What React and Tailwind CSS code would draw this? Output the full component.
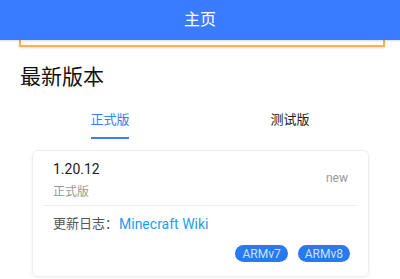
const font = { fontFamily: 'Roboto, "Noto Sans CJK SC", sans-serif' };

const App = () => {
  return (
    <div className="w-[400px] h-[279px] overflow-hidden bg-white" style={font}>
      {/* Header */}
      <div className="relative z-10 h-10 bg-[#3a7cff] flex items-center justify-center shadow-[0_1px_2px_rgba(0,0,0,0.15)]">
        <span className="text-white text-[16px]">主页</span>
      </div>
      <div className="mx-[19px] mr-[15px] h-[7px] bg-white border-x-2 border-b-2 border-[#fdb04f] shadow-sm"></div>

      {/* Title */}
      <h1 className="pl-5 pt-[16px] text-[21px] leading-[28px] text-[#111]">最新版本</h1>

      {/* Tabs */}
      <div className="px-5 grid grid-cols-2 mt-[20px]">
        <div className="flex justify-center">
          <div className="flex flex-col items-center">
            <span className="text-[13px] leading-[18px] text-[#3a7cff]">正式版</span>
            <div className="mt-[8px] h-[2px] w-[38px] bg-[#3a7cff]"></div>
          </div>
        </div>
        <div className="flex justify-center">
          <span className="text-[13px] leading-[18px] text-[#222]">测试版</span>
        </div>
      </div>

      {/* Card */}
      <div className="mt-[11px] ml-8 mr-[31px] border border-[#eceef2] rounded-md shadow-[0_1px_4px_rgba(0,0,0,0.06)] px-[10px] pt-[8px] pb-[14px]">
        <div className="flex items-center justify-between px-[10px]">
          <div>
            <div className="text-[14px] leading-[20px] text-[#1a1a1a]">1.20.12</div>
            <div className="mt-[5px] text-[12px] leading-[16px] text-[#999]">正式版</div>
          </div>
          <span className="text-[12px] text-[#999] mt-[-4px]">new</span>
        </div>
        <div className="mt-[5px] h-px bg-[#eeeff3]"></div>
        <div className="px-[10px] mt-[8px] flex items-center text-[13px] leading-[20px]">
          <span className="text-[#555]">更新日志：</span>
          <span className="ml-[1px] text-[14px] text-[#1aa0f0]">Minecraft Wiki</span>
        </div>
        <div className="flex justify-end gap-[10px] px-[8px] mt-[11px]">
          <span className="px-[7px] h-[17px] flex items-center rounded-full bg-[#2979f2] text-[12px] text-[#cfe0ff]">ARMv7</span>
          <span className="px-[7px] h-[17px] flex items-center rounded-full bg-[#2979f2] text-[12px] text-[#cfe0ff]">ARMv8</span>
        </div>
      </div>
    </div>
  );
};

export default App;
